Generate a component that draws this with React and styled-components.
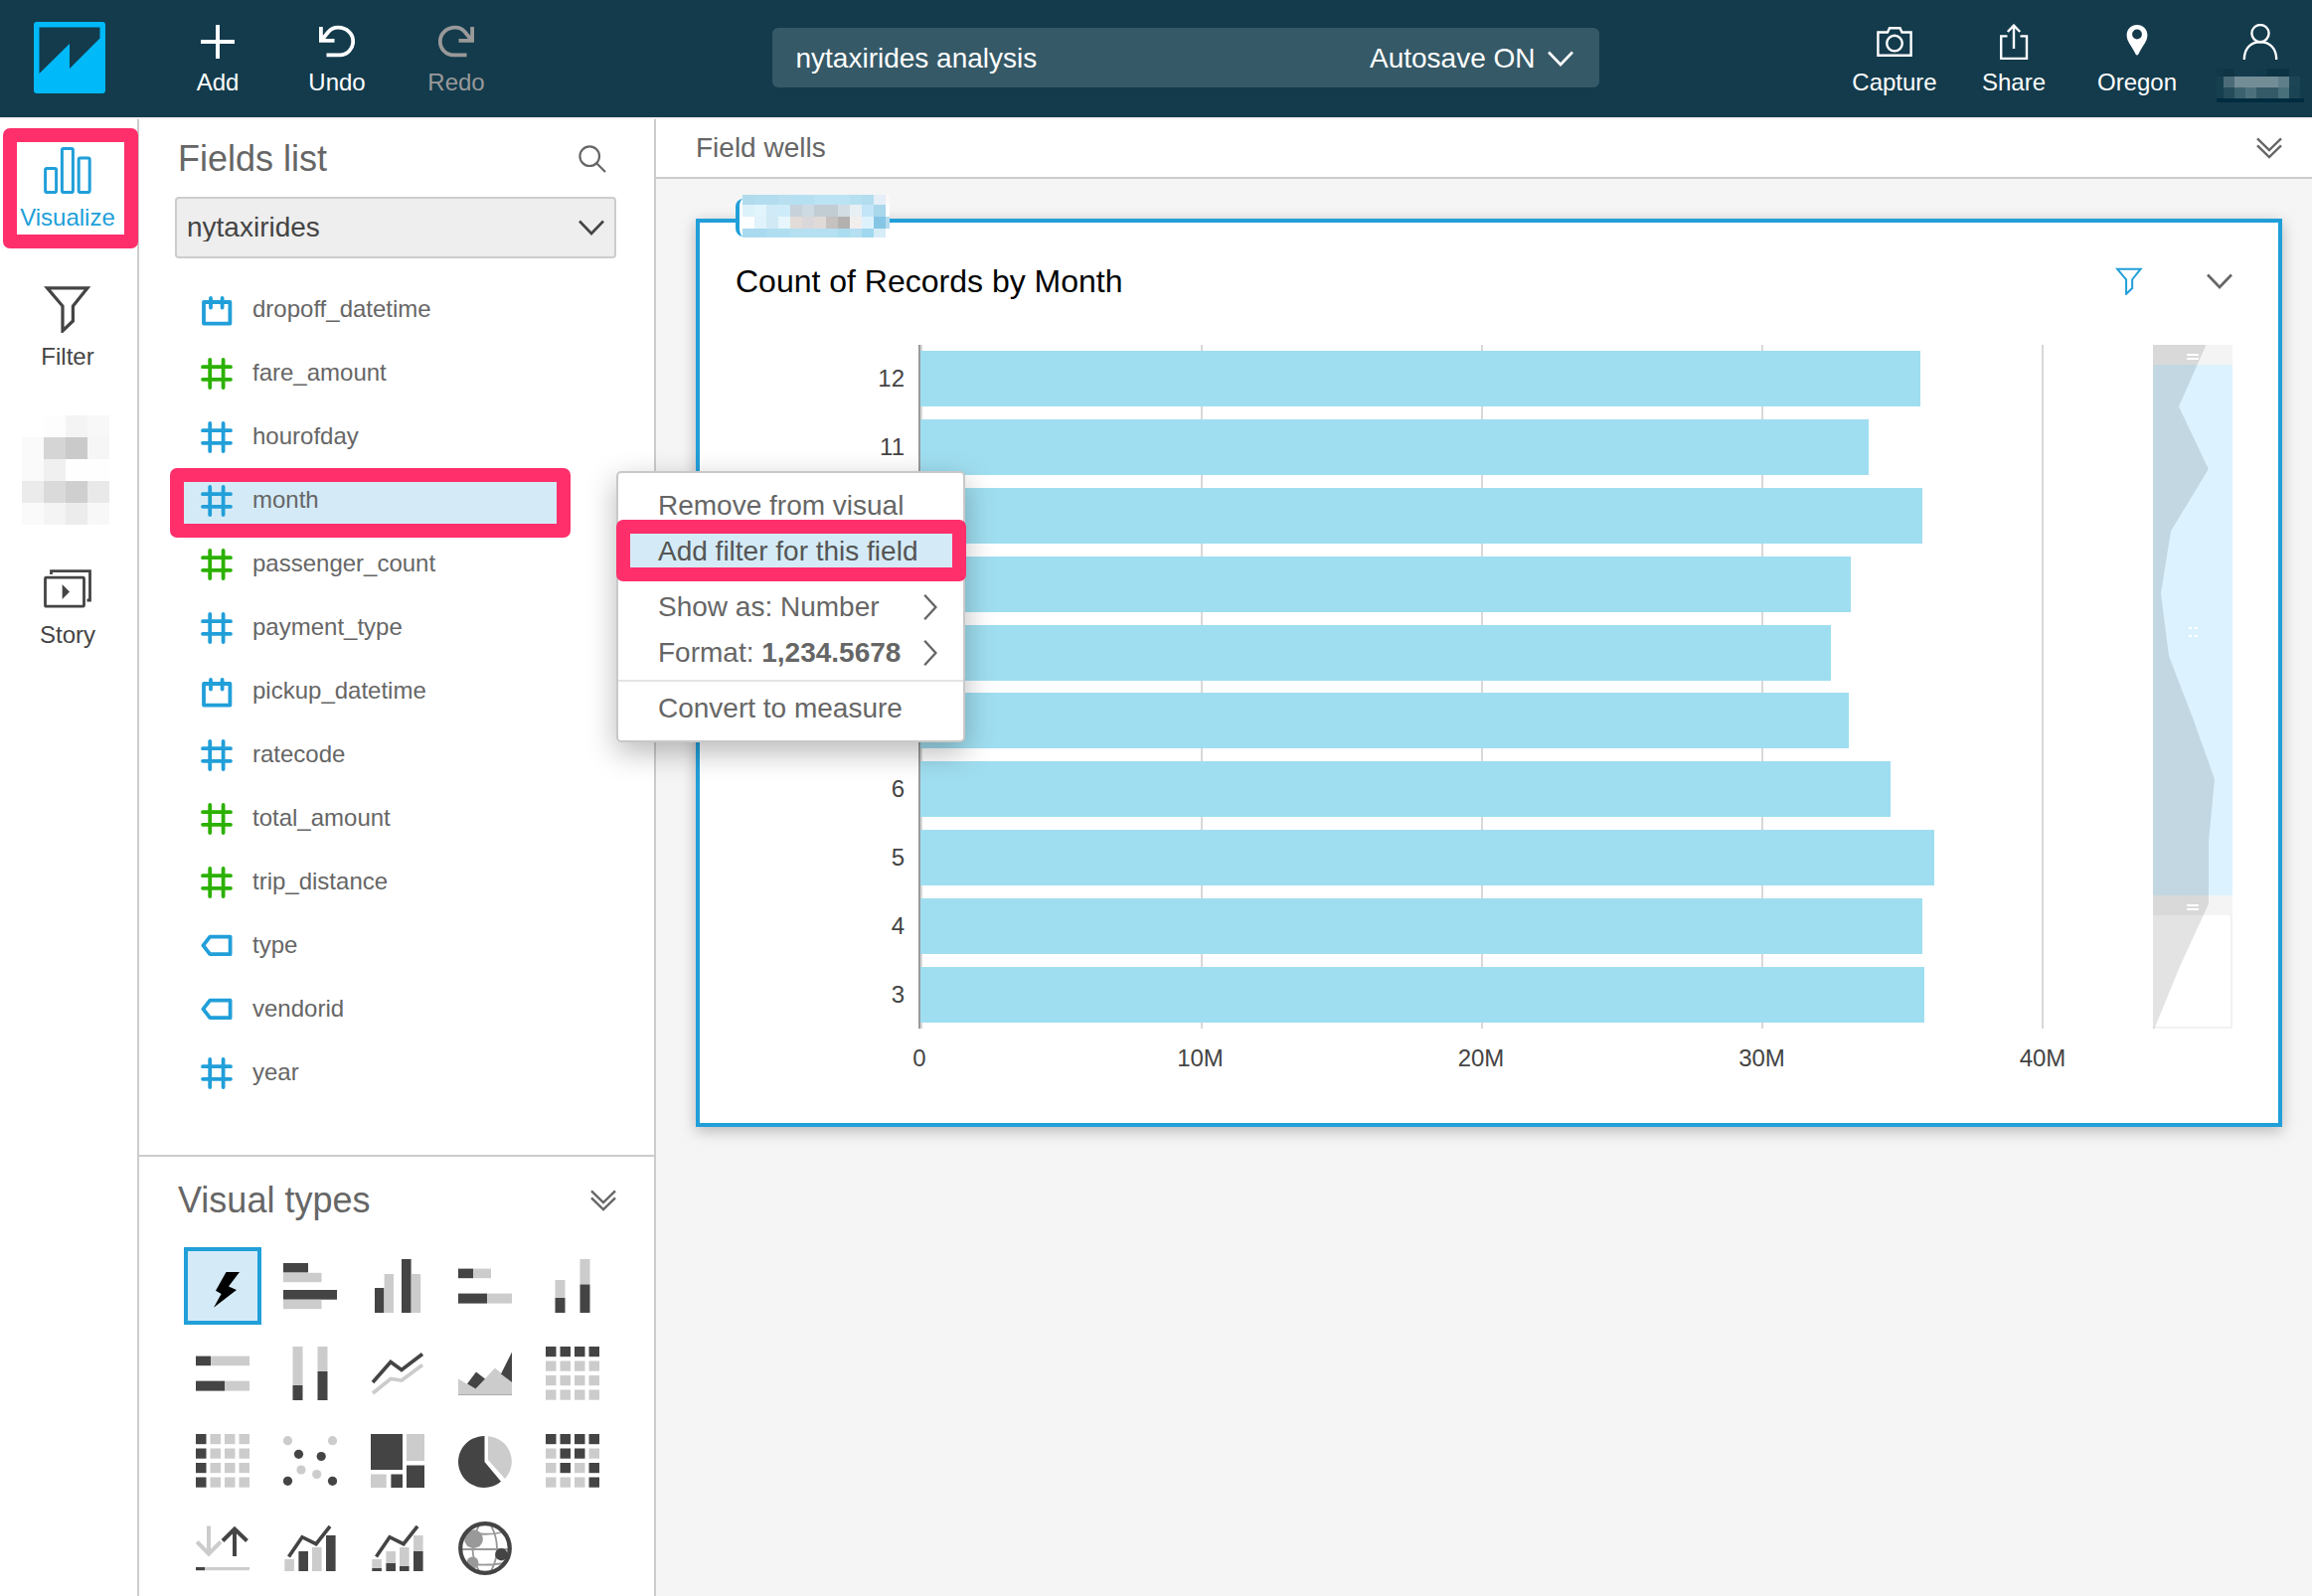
import React from "react";
import styled, { createGlobalStyle, css } from "styled-components";

const color = {
  header: "#133b4c",
  headerField: "#355967",
  blue: "#219fd9",
  green: "#2bb100",
  pale: "#d4ebf7",
  bar: "#9fdef0",
  dark: "#444444",
  text: "#666666",
  light: "#cccccc",
  pink: "#ff2f6c",
  canvas: "#f5f5f5",
};

const GlobalStyle = createGlobalStyle`
  *, *::before, *::after { box-sizing: border-box; }
  body {
    margin: 0;
    background: ${color.canvas};
    color: ${color.text};
    font-family: "Helvetica Neue", "Liberation Sans", Arial, sans-serif;
    font-size: 24px;
    line-height: 28px;
  }
  button, input, select {
    margin: 0;
    padding: 0;
    border: 0;
    background: none;
    color: inherit;
    font: inherit;
  }
  button { cursor: pointer; }
  ul { margin: 0; padding: 0; list-style: none; }
  svg { display: block; flex: none; }
`;

/* ---------- layout ---------- */

const Page = styled.div`
  display: flex;
  flex-direction: column;
  min-height: 100vh;
`;

const Header = styled.header`
  display: flex;
  align-items: flex-start;
  height: 120px;
  border-bottom: 2px solid #f6f0f2;
  background: ${color.header};
  color: #fff;
`;

const Logo = styled.a`
  margin: 22px 53px 0 34px;
`;

const Toolbar = styled.nav`
  display: grid;
  grid-template-columns: ${(p) => p.$columns};
`;

const ToolButton = styled.button`
  display: flex;
  flex-direction: column;
  align-items: center;
  gap: 9px;
  padding-top: 24px;
  &:disabled { color: #999; }
`;

const UserButton = styled(ToolButton)`
  margin-left: 8px;
`;

const TitleSlot = styled.div`
  display: flex;
  flex: 1;
  justify-content: center;
  padding: 28px 0 0 20px;
`;

const TitleBar = styled.div`
  display: flex;
  align-items: center;
  width: 832px;
  height: 60px;
  padding: 2px 26px 0 24px;
  border-radius: 6px;
  background: ${color.headerField};
  font-size: 28px;
`;

const TitleInput = styled.input`
  flex: 1;
  min-width: 0;
`;

const AutosaveButton = styled.button`
  display: flex;
  align-items: center;
  gap: 12px;
`;

const Body = styled.div`
  display: flex;
  flex: 1;
  background: #fff;
`;

const Sidebar = styled.nav`
  display: flex;
  flex: none;
  flex-direction: column;
  gap: 54px;
  width: 140px;
  padding-top: 27px;
  border-right: 2px solid ${color.light};
`;

const pinkFrame = css`
  position: relative;
  &::after {
    content: "";
    position: absolute;
    inset: ${(p) => p.$frame};
    border: 14px solid ${color.pink};
    border-radius: 7px;
    pointer-events: none;
  }
`;

const SideButton = styled.button`
  display: flex;
  flex-direction: column;
  align-items: center;
  gap: 10px;
  height: 86px;
  padding-right: 2px;
  color: ${(p) => (p.$active ? color.blue : color.dark)};
  ${(p) => p.$frame && pinkFrame}
`;

const SideMosaic = styled.div`
  display: flex;
  align-items: center;
  justify-content: center;
  height: 86px;
  padding: 6px 6px 0 0;
`;

const Mosaic = styled.div`
  display: grid;
  flex: none;
  grid-template-columns: ${(p) => p.$columns};
  grid-template-rows: ${(p) => p.$rows};
`;

const Pixel = styled.span`
  background: ${(p) => p.$fill};
`;

const Panel = styled.div`
  flex: none;
  width: 520px;
  border-right: 2px solid ${color.light};
`;

const PanelSection = styled.section`
  padding: ${(p) => p.$pad};
  & + & { border-top: 2px solid ${color.light}; }
`;

const PanelHead = styled.div`
  display: flex;
  align-items: center;
  justify-content: space-between;
  padding: 0 ${(p) => p.$end} 0 3px;
`;

const PanelTitle = styled.h2`
  margin: 0;
  font-size: 36px;
  font-weight: 400;
  line-height: 40px;
`;

const IconButton = styled.button`
  display: flex;
  color: ${(p) => p.$color || color.text};
`;

const SelectBox = styled.div`
  display: grid;
  align-items: center;
  margin: 18px 0 20px;
  color: ${color.dark};
  & > * { grid-area: 1 / 1; }
  & > svg {
    justify-self: end;
    margin-right: 12px;
    pointer-events: none;
  }
`;

const Select = styled.select`
  appearance: none;
  width: 100%;
  height: 62px;
  padding: 0 50px 0 10px;
  border: 2px solid ${color.light};
  border-radius: 4px;
  background: #eee;
  font-size: 28px;
`;

const FieldItem = styled.li`
  position: relative;
`;

const FieldButton = styled.button`
  display: flex;
  align-items: center;
  gap: 20px;
  width: 100%;
  height: 64px;
  padding-left: 26px;
  text-align: left;
  ${(p) => p.$frame && pinkFrame}
  ${(p) =>
    p.$frame &&
    css`
      background: linear-gradient(${color.pale}, ${color.pale}) 0 50% / 390px 60px no-repeat;
    `}
`;

const FieldName = styled.span`
  padding-bottom: 2px;
`;

const Menu = styled.div`
  position: absolute;
  z-index: 2;
  top: 2px;
  left: 444px;
  width: 351px;
  padding: 10px 0 9px;
  border: 2px solid #c8c8c8;
  border-radius: 5px;
  background: #fff;
  box-shadow: 0 10px 30px rgba(0, 0, 0, 0.28);
  font-size: 28px;
`;

const MenuItem = styled.button`
  display: flex;
  align-items: center;
  width: 100%;
  height: 46px;
  padding: 0 26px 0 40px;
  text-align: left;
  white-space: pre;
  & > svg { margin-left: auto; }
  ${(p) => p.$frame && pinkFrame}
  ${(p) =>
    p.$frame &&
    css`
      background: ${color.pale};
      color: #555;
    `}
`;

const MenuRule = styled.hr`
  height: 2px;
  margin: 4px 0;
  border: 0;
  background: #e4e4e4;
`;

const VisualGrid = styled.div`
  display: grid;
  grid-template-columns: repeat(5, 78px);
  gap: 10px;
  margin: 27px 0 0 9px;
`;

const VisualButton = styled.button`
  display: grid;
  place-items: center;
  height: 78px;
  border: 4px solid ${(p) => (p.$active ? color.blue : "transparent")};
  background: ${(p) => (p.$active ? color.pale : "none")};
`;

const Main = styled.main`
  flex: 1;
  min-width: 0;
  background: ${color.canvas};
`;

const Wells = styled.div`
  display: flex;
  align-items: center;
  justify-content: space-between;
  height: 60px;
  padding: 0 30px 0 40px;
  border-bottom: 2px solid ${color.light};
  background: #fff;
  font-size: 28px;
`;

const Card = styled.section`
  position: relative;
  margin: 40px 30px 40px 40px;
  padding: 41px 46px 51px 36px;
  border: 4px solid ${color.blue};
  background: #fff;
  box-shadow: 0 4px 14px rgba(0, 0, 0, 0.25);
`;

const Badge = styled.div`
  position: absolute;
  top: -24px;
  left: 36px;
  height: 38px;
  padding-left: 3px;
  border-left: 4px solid ${color.blue};
  border-radius: 8px 0 0 8px;
  background: #fff;
  & > div { margin-top: -4px; }
`;

const CardHead = styled.div`
  display: flex;
  align-items: center;
  gap: 64px;
  height: 36px;
`;

const CardTitle = styled.h1`
  flex: 1;
  margin: 0;
  color: #000;
  font-size: 32px;
  font-weight: 400;
  line-height: 36px;
`;

const Chart = styled.div`
  display: grid;
  grid-template-columns: 184px 1fr 80px;
  grid-template-rows: 688px 28px;
  row-gap: 16px;
  margin-top: 46px;
  color: ${color.dark};
`;

const MonthLabels = styled.div`
  display: grid;
  grid-auto-rows: 1fr;
  align-items: center;
  padding-right: 14px;
  text-align: right;
`;

const MonthLabel = styled.span`
  visibility: ${(p) => (p.$covered ? "hidden" : "visible")};
`;

const Plot = styled.div`
  display: grid;
  margin-right: 110px;
  border-left: 2px solid #999;
  & > * { grid-area: 1 / 1; }
`;

const GridLines = styled.div`
  display: flex;
  justify-content: space-between;
  & > i {
    width: 2px;
    background: #d8d8d8;
  }
`;

const Bars = styled.div`
  display: grid;
  grid-auto-rows: 1fr;
  align-items: center;
`;

const Bar = styled.div`
  height: 56px;
  background: ${color.bar};
`;

const AxisLabels = styled.div`
  display: flex;
  grid-column: 2;
  justify-content: space-between;
  margin-right: 110px;
  & > span {
    display: flex;
    justify-content: center;
    width: 2px;
  }
`;

/* ---------- icons ---------- */

function Line({ w, h, sw = 2, box, children }) {
  return (
    <svg
      width={w}
      height={h}
      viewBox={box || `0 0 ${w} ${h}`}
      fill="none"
      stroke="currentColor"
      strokeWidth={sw}
      aria-hidden="true"
    >
      {children}
    </svg>
  );
}

const LogoMark = () => (
  <svg width="72" height="72" viewBox="0 0 72 72" role="img" aria-label="Home">
    <rect width="72" height="72" rx="3" fill="#00b9f9" />
    <path d="M5.5 5.5H66.5V16.5L36 47V22L5.5 52Z" fill={color.header} />
  </svg>
);

const PlusIcon = () => (
  <Line w={36} h={36} sw={4}><path d="M18 1V35M1 18H35" /></Line>
);
const undoPath = "M1.9 3V16.9H15.5M2.5 16.5L9 8.5C12 5 15 3.7 19 3.7C28 3.7 34.2 10 34.2 17.5C34.2 25 28.5 31.3 21 31.3H7.5";
const UndoIcon = () => (
  <Line w={36} h={36} sw={3.8}><path d={undoPath} /></Line>
);
const RedoIcon = () => (
  <Line w={36} h={36} sw={3.8}><path d={undoPath} transform="matrix(-1 0 0 1 36 0)" /></Line>
);
const CameraIcon = () => (
  <Line w={36} h={36} sw={2.4}>
    <path d="M1.4 8.5H11L13 4.2H23.5L25.5 8.5H34.6V31.8H1.4Z" />
    <circle cx="18" cy="19.6" r="7.8" />
  </Line>
);
const ShareIcon = () => (
  <Line w={36} h={36} sw={2.4}>
    <path d="M11.5 12.4H5.2V35H31V12.4H24.5M18 25V2M11.8 8L18 1.6L24.2 8" />
  </Line>
);
const PinIcon = () => (
  <svg width="36" height="36" viewBox="0 0 36 36" fill="currentColor" fillRule="evenodd" aria-hidden="true">
    <path d="M18 1C12 1 7.6 5.5 7.6 11.3C7.6 18 12.6 22 16.4 30.2Q18 33 19.6 30.2C23.4 22 28.4 18 28.4 11.3C28.4 5.5 24 1 18 1ZM18 5.6A4.9 4.9 0 1 1 18 15.4A4.9 4.9 0 1 1 18 5.6Z" />
  </svg>
);
const UserIcon = () => (
  <Line w={36} h={36} sw={2.4}>
    <circle cx="18" cy="9.6" r="8.6" />
    <path d="M1.8 36C1.8 25 8 18.3 18 18.3S34.2 25 34.2 36" />
  </Line>
);
const ChevronDown = ({ sw = 2.6 }) => (
  <Line w={26} h={16} sw={sw}><path d="M1 1.5L13 14L25 1.5" /></Line>
);
const ChevronRight = () => (
  <Line w={14} h={28} sw={2.4}><path d="M1.2 1.8L12.4 14L1.2 26.2" /></Line>
);
const DoubleChevron = () => (
  <Line w={26} h={22} sw={2.4}><path d="M1 1.4L13 13L25 1.4M1 8.4L13 20L25 8.4" /></Line>
);
const SearchIcon = () => (
  <Line w={28} h={28} sw={2.2}>
    <circle cx="11.2" cy="11.2" r="9.8" />
    <path d="M18 18L27 27" />
  </Line>
);
const VisualizeIcon = () => (
  <Line w={48} h={48} sw={3}>
    <rect x="1.6" y="22.6" width="11" height="24" rx="1.5" />
    <rect x="18.4" y="2.6" width="11" height="44" rx="1.5" />
    <rect x="35.2" y="12" width="11" height="34.6" rx="1.5" />
  </Line>
);
const funnel = "M3.5 2.8H44L29.4 21V36L19 46V21Z";
const FilterIcon = () => (
  <Line w={48} h={48} sw={3.2}><path d={funnel} /></Line>
);
const SmallFilterIcon = () => (
  <Line w={28} h={28} sw={3.4} box="0 0 48 48"><path d={funnel} /></Line>
);
const StoryIcon = () => (
  <Line w={48} h={48} sw={2.8}>
    <rect x="1.5" y="14.2" width="39" height="29" rx="1" />
    <path d="M7.5 11V7.6H46.5V37H43.5" />
    <path d="M18.6 21L26 28.5L18.6 36Z" fill="currentColor" stroke="none" />
  </Line>
);

function FieldIcon({ kind, tone }) {
  const shapes = {
    number: <path d="M9.2 2V30M22.6 2V30M2 9.2H30M2 21.8H30" strokeLinecap="round" />,
    date: (
      <>
        <rect x="3" y="8" width="26.4" height="21.6" strokeLinejoin="round" />
        <path d="M10 4V13.5M21.6 4V13.5" strokeLinecap="round" />
      </>
    ),
    text: <path d="M9.2 6.6H29.6V24.2H9.2L2.4 15.4Z" strokeLinejoin="round" />,
  };
  return (
    <svg width="32" height="32" viewBox="0 0 32 32" fill="none" stroke={tone} strokeWidth="3.8" aria-hidden="true">
      {shapes[kind]}
    </svg>
  );
}

/* Rectangles as [x, y, width, height, isDark] in a 54 unit square. */
const Rects = ({ list }) =>
  list.map(([x, y, w, h, d], i) => (
    <rect key={i} x={x} y={y} width={w} height={h} fill={d ? color.dark : color.light} />
  ));

const tiles = (rows) =>
  rows.flatMap((row, r) => [...row].map((c, i) => [i * 14.5, r * 14.5, 10.5, 10.2, c === "1"]));

const comboLine = (
  <path d="M5.5 35.5L19 15.7L33 22.7L47 4.8" fill="none" stroke={color.dark} strokeWidth="3.6" />
);

const visuals = [
  ["AutoGraph", <path d="M30.5 13H44L33 27.5L41 31L18 48.7L25.6 35L20 31.7Z" fill="#000" />],
  ["Horizontal bar chart", <Rects list={[[0, 4, 25, 9.5, 1], [0, 13.8, 38.5, 9.4], [0, 31, 54, 9.7, 1], [0, 40.8, 38.5, 9.4]]} />],
  ["Vertical bar chart", <Rects list={[[4, 29, 9.4, 25, 1], [13.6, 15, 9.4, 39], [31, 0, 9.6, 54, 1], [40.8, 15, 9.4, 39]]} />],
  ["Horizontal stacked bar chart", <Rects list={[[0, 9.6, 15, 9.6, 1], [15, 9.6, 18, 9.6], [0, 34.6, 29, 10, 1], [29, 34.6, 25, 10]]} />],
  ["Vertical stacked bar chart", <Rects list={[[9.5, 21, 10, 18], [9.5, 39, 10, 15, 1], [34.5, 0, 10, 25.5], [34.5, 25.5, 10, 28.5, 1]]} />],
  ["Horizontal stacked 100% bar chart", <Rects list={[[0, 9.6, 15, 9.6, 1], [15, 9.6, 39, 9.6], [0, 34.6, 29, 10, 1], [29, 34.6, 25, 10]]} />],
  ["Vertical stacked 100% bar chart", <Rects list={[[9.5, 0, 10, 39], [9.5, 39, 10, 15, 1], [34.5, 0, 10, 25], [34.5, 25, 10, 29, 1]]} />],
  ["Line chart", (
    <g fill="none" strokeWidth="3.6">
      <path d="M2 47L20 32.5L31 34L52 18.5" stroke={color.light} />
      <path d="M2 36L20 15.5L31 23.5L52 7.5" stroke={color.dark} />
    </g>
  )],
  ["Area line chart", (
    <>
      <path d="M0 32.5L17.5 42.5L37 21.5L54 36V49H0Z" fill={color.light} />
      <path d="M9 37.5L18 25.5L27 32.5L17.5 42.5ZM54 5.5V36L43 27.5Z" fill={color.dark} />
      <path d="M0 48.6H54" stroke="#aaa" />
    </>
  )],
  ["Pivot table", <Rects list={tiles(["1111", "0000", "0000", "0000"])} />],
  ["Tabular report", <Rects list={tiles(["1000", "1000", "1000", "1000"])} />],
  ["Scatter plot", (
    <>
      {[[4.5, 6.7], [49.5, 6.7], [18, 36], [33.7, 40.5]].map(([x, y]) => (
        <circle key={x} cx={x} cy={y} r="4.6" fill={color.light} />
      ))}
      {[[15.5, 20.3], [38.2, 22.5], [4.5, 47.3], [49.5, 47.3]].map(([x, y]) => (
        <circle key={x} cx={x} cy={y} r="4.6" fill={color.dark} />
      ))}
    </>
  )],
  ["Tree map", <Rects list={[[0, 0, 32, 36, 1], [36, 0, 18, 27], [36, 31.5, 18, 22.5, 1], [0, 40.5, 15.7, 13.5], [20.4, 40.5, 11.6, 13.5, 1]]} />],
  ["Pie chart", (
    <>
      <path d="M26.5 2A26 26 0 1 0 43 47.7L26.5 28Z" fill={color.dark} />
      <path d="M30 2.2A25.5 25.5 0 0 1 47 45L30 26Z" fill={color.light} />
    </>
  )],
  ["Heat map", <Rects list={tiles(["1111", "0110", "0101", "0001"])} />],
  ["KPI", (
    <>
      <g fill="none" strokeWidth="4">
        <path d="M13 4.6V32M1.2 20.5L13 32.6L25 20.5" stroke={color.light} />
        <path d="M39 35V8M27 19.5L39 7.5L51.5 19.5" stroke={color.dark} />
      </g>
      <Rects list={[[0, 46, 9, 3.2, 1], [9, 46, 45, 3.2]]} />
    </>
  )],
  ["Combo bar chart", (
    <>
      <Rects list={[[1.3, 38, 9.6, 12], [15.4, 30, 9.6, 20, 1], [29, 26, 9.6, 24], [43, 14, 9.6, 36, 1]]} />
      {comboLine}
    </>
  )],
  ["Stacked combo bar chart", (
    <>
      <Rects
        list={[
          [1.3, 38, 9.6, 9], [1.3, 47, 9.6, 3, 1],
          [15.4, 30, 9.6, 12], [15.4, 42, 9.6, 8, 1],
          [29, 26, 9.6, 19], [29, 45, 9.6, 5, 1],
          [43, 14, 9.6, 16], [43, 30, 9.6, 20, 1],
        ]}
      />
      {comboLine}
    </>
  )],
  ["Geospatial chart", (
    <>
      <g fill="none" stroke="#999" strokeWidth="1.8">
        <path d="M4 28H50M15 12Q32 14 46 10.5M12 43Q30 44.5 46 42M21 4Q8 27 21 50M33 4Q45 27 33 50" />
      </g>
      <circle cx="15.5" cy="17.7" r="9.4" fill="#999" />
      <circle cx="14.4" cy="41.4" r="6" fill="#999" />
      <circle cx="43.4" cy="33.2" r="6.2" fill={color.dark} />
      <circle cx="27" cy="27" r="24.8" fill="none" stroke={color.dark} strokeWidth="4.2" />
    </>
  )],
];

/* ---------- data ---------- */

const fields = [
  ["dropoff_datetime", "date", color.blue],
  ["fare_amount", "number", color.green],
  ["hourofday", "number", color.blue],
  ["month", "number", color.blue],
  ["passenger_count", "number", color.green],
  ["payment_type", "number", color.blue],
  ["pickup_datetime", "date", color.blue],
  ["ratecode", "number", color.blue],
  ["total_amount", "number", color.green],
  ["trip_distance", "number", color.green],
  ["type", "text", color.blue],
  ["vendorid", "text", color.blue],
  ["year", "number", color.blue],
];

/* Millions of records in each month, on an axis that ends at 40. */
const months = [
  [12, 35.61], [11, 33.77], [10, 35.68], [9, 33.13], [8, 32.42],
  [7, 33.06], [6, 34.55], [5, 36.11], [4, 35.68], [3, 35.75],
];

/* Months whose labels lie behind the open field menu. */
const coveredMonths = [10, 9, 8, 7];

const sidePixels = [
  "#fff", "#fdfdfd", "#f4f4f4", "#f8f8f8",
  "#fafafa", "#d5d5d5", "#cacaca", "#f6f6f6",
  "#fafafa", "#f0f0f0", "#fefefe", "#fefefe",
  "#ebebeb", "#dadada", "#cfcfcf", "#e9e9e9",
  "#fafafa", "#f4f4f4", "#ececec", "#f8f8f8",
];

const userPixels = [
  "#113848", "#0f3545", "#133b4c", "#133b4c", "#113a4b", "#0b3344", "#0b3344", "#133b4c", "#133b4c",
  "#17404f", "#4b6b79", "#738d97", "#738d97", "#738d97", "#738d97", "#5f7f8a", "#1b4554", "#133b4c",
  "#153e4e", "#244c5b", "#3b616f", "#4d717c", "#345a68", "#345a68", "#48707b", "#1a4353", "#133b4c",
  ...Array(9).fill("#002c3f"),
];

const badgePixels = [
  "#b0dbed", "#b3ddef", "#b3ddef", "#b8dff0", "#b6e0f2", "#b6e0f2", "#bbe3f3", "#bbe3f3", "#bbe3f3", "#b6e0f0", "#b2ddee", "#e6eef7", "#fbf8f8",
  "#dcf2fb", "#e2f4fc", "#d0eaf7", "#ceebfa", "#c7d1da", "#cedae2", "#c2ccd3", "#c2ccd3", "#d2dde3", "#e8f0f4", "#c2e5f7", "#a9d7eb", "transparent",
  "#fdfeff", "#e0f2fb", "#d0e9f5", "#e6f6fc", "#e2dbd8", "#d9d7d9", "#dfdad8", "#c5c1bf", "#b3b1af", "#f3eeee", "#def2fd", "#85c6e5", "#b4dbef",
  "#a9daef", "#a9daf0", "#b0def1", "#b0def1", "#b4e0f2", "#b4e0f2", "#b4e0f2", "#b4e0f2", "#acdcf0", "#b4e0f2", "#a0d8ef", "#d6edf8", "transparent",
];

function Redacted({ pixels, columns, rows }) {
  return (
    <Mosaic $columns={columns} $rows={rows} aria-hidden="true">
      {pixels.map((fill, i) => <Pixel key={i} $fill={fill} />)}
    </Mosaic>
  );
}

/* ---------- parts ---------- */

function Overview() {
  return (
    <svg width="80" height="688" viewBox="0 0 80 688" role="img" aria-label="Visible range of months">
      <path d="M79 0V687H0" fill="none" stroke="#f2f2f2" strokeWidth="2" />
      <rect width="80" height="20" fill="#f4f4f4" />
      <rect y="554" width="80" height="20" fill="#f4f4f4" />
      <rect y="20" width="80" height="534" fill="#dcf2fe" />
      <path
        d="M0 0H53.5L26 62L55.8 125L18 187.5L8 250L16 313L39.7 374.5L62 437L56 500V562.5L27.3 625L1.5 688H0Z"
        fill="#000"
        fillOpacity="0.11"
      />
      <g stroke="#fff" strokeWidth="2">
        <path d="M34 10H46M34 14H46M34 564H46M34 568H46" />
        <path d="M36 285H39M42 285H45M36 293H39M42 293H45" />
      </g>
    </svg>
  );
}

function FieldMenu() {
  return (
    <Menu role="menu">
      <MenuItem role="menuitem">Remove from visual</MenuItem>
      <MenuItem role="menuitem" $frame="-9px -3px -7px -2px">Add filter for this field</MenuItem>
      <MenuRule />
      <MenuItem role="menuitem">Show as: Number<ChevronRight /></MenuItem>
      <MenuItem role="menuitem">Format: <b>1,234.5678</b><ChevronRight /></MenuItem>
      <MenuRule />
      <MenuItem role="menuitem">Convert to measure</MenuItem>
    </Menu>
  );
}

export default function App() {
  return (
    <Page>
      <GlobalStyle />
      <Header>
        <Logo href="#"><LogoMark /></Logo>
        <Toolbar $columns="repeat(3, 120px)">
          <ToolButton><PlusIcon />Add</ToolButton>
          <ToolButton><UndoIcon />Undo</ToolButton>
          <ToolButton disabled><RedoIcon />Redo</ToolButton>
        </Toolbar>
        <TitleSlot>
          <TitleBar>
            <TitleInput aria-label="Analysis name" defaultValue="nytaxirides analysis" />
            <AutosaveButton>Autosave ON<ChevronDown /></AutosaveButton>
          </TitleBar>
        </TitleSlot>
        <Toolbar $columns="120px 120px 128px 112px">
          <ToolButton><CameraIcon />Capture</ToolButton>
          <ToolButton><ShareIcon />Share</ToolButton>
          <ToolButton><PinIcon />Oregon</ToolButton>
          <UserButton aria-label="Account">
            <UserIcon />
            <Redacted pixels={userPixels} columns="7px repeat(7, 11px) 4px" rows="8px 11px 11px 4px" />
          </UserButton>
        </Toolbar>
      </Header>

      <Body>
        <Sidebar>
          <SideButton $active $frame="-18px -1px -17px 3px"><VisualizeIcon />Visualize</SideButton>
          <SideButton><FilterIcon />Filter</SideButton>
          <SideMosaic>
            <Redacted pixels={sidePixels} columns="repeat(4, 22px)" rows="repeat(5, 22px)" />
          </SideMosaic>
          <SideButton><StoryIcon />Story</SideButton>
        </Sidebar>

        <Panel>
          <PanelSection $pad="20px 38px 50px 36px">
            <PanelHead $end="10px">
              <PanelTitle>Fields list</PanelTitle>
              <IconButton aria-label="Search fields"><SearchIcon /></IconButton>
            </PanelHead>
            <SelectBox>
              <Select aria-label="Data set" defaultValue="nytaxirides">
                <option>nytaxirides</option>
              </Select>
              <ChevronDown />
            </SelectBox>
            <ul>
              {fields.map(([name, kind, tone]) => (
                <FieldItem key={name}>
                  <FieldButton $frame={name === "month" && "-1px 46px -5px -5px"}>
                    <FieldIcon kind={kind} tone={tone} />
                    <FieldName>{name}</FieldName>
                  </FieldButton>
                  {name === "month" && <FieldMenu />}
                </FieldItem>
              ))}
            </ul>
          </PanelSection>
          <PanelSection $pad="24px 38px 9px 36px">
            <PanelHead $end="0">
              <PanelTitle>Visual types</PanelTitle>
              <IconButton aria-label="Collapse visual types"><DoubleChevron /></IconButton>
            </PanelHead>
            <VisualGrid>
              {visuals.map(([name, art], i) => (
                <VisualButton key={name} aria-label={name} $active={i === 0}>
                  <svg width="54" height="54" viewBox="0 0 54 54" aria-hidden="true">{art}</svg>
                </VisualButton>
              ))}
            </VisualGrid>
          </PanelSection>
        </Panel>

        <Main>
          <Wells>
            Field wells
            <IconButton aria-label="Expand field wells"><DoubleChevron /></IconButton>
          </Wells>
          <Card>
            <Badge>
              <Redacted pixels={badgePixels} columns="repeat(12, 12px) 4px" rows="10px 12px 12px 9px" />
            </Badge>
            <CardHead>
              <CardTitle>Count of Records by Month</CardTitle>
              <IconButton aria-label="Filters" $color={color.blue}><SmallFilterIcon /></IconButton>
              <IconButton aria-label="Visual menu"><ChevronDown /></IconButton>
            </CardHead>
            <Chart>
              <MonthLabels>
                {months.map(([m]) => (
                  <MonthLabel key={m} $covered={coveredMonths.includes(m)}>{m}</MonthLabel>
                ))}
              </MonthLabels>
              <Plot>
                <GridLines><i /><i /><i /><i /><i /></GridLines>
                <Bars>
                  {months.map(([m, v]) => <Bar key={m} style={{ width: `${v / 0.4}%` }} />)}
                </Bars>
              </Plot>
              <Overview />
              <AxisLabels>
                {["0", "10M", "20M", "30M", "40M"].map((t) => <span key={t}>{t}</span>)}
              </AxisLabels>
            </Chart>
          </Card>
        </Main>
      </Body>
    </Page>
  );
}
